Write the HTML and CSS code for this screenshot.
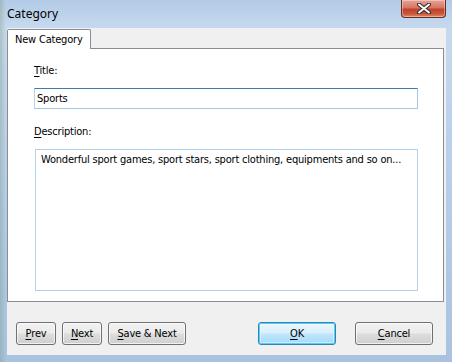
FILE: index.html
```html
<!DOCTYPE html>
<html>
<head>
<meta charset="utf-8">
<link rel="stylesheet" href="styles.css">
</head>
<body>
<div class="window">
  <div class="titlebar">
    <span class="title">Category</span>
    <div class="close">
      <svg width="18" height="11" viewBox="0 0 18 11">
        <path d="M4 1.5 L14 9.5 M14 1.5 L4 9.5" stroke="#2d2d2d" stroke-width="4" stroke-linecap="round"/>
        <path d="M4 1.5 L14 9.5 M14 1.5 L4 9.5" stroke="#ffffff" stroke-width="2" stroke-linecap="round"/>
      </svg>
    </div>
  </div>
  <div class="client">
    <div class="tabs">
      <div class="tab">New Category</div>
    </div>
    <div class="panel">
      <div class="label"><u>T</u>itle:</div>
      <div class="input">Sports</div>
      <div class="label label-desc"><u>D</u>escription:</div>
      <div class="textarea">Wonderful sport games, sport stars, sport clothing, equipments and so on...</div>
    </div>
    <div class="buttons">
      <div class="group">
        <div class="btn btn-sm"><u>P</u>rev</div>
        <div class="btn btn-sm"><u>N</u>ext</div>
        <div class="btn btn-md"><u>S</u>ave &amp; Next</div>
      </div>
      <div class="group group-right">
        <div class="btn btn-lg btn-default"><u>O</u>K</div>
        <div class="btn btn-lg"><u>C</u>ancel</div>
      </div>
    </div>
  </div>
</div>
</body>
</html>
```

FILE: styles.css
```css
html, body {
  margin: 0;
  padding: 0;
}
body {
  width: 452px;
  height: 362px;
  overflow: hidden;
  background: #b8cfe8;
}
.window {
  width: 452px;
  height: 362px;
  box-sizing: border-box;
  padding: 0 6px 7px 7px;
  background:
    linear-gradient(90deg, rgba(120,150,120,0.35) 0px, rgba(160,190,220,0.0) 6px),
    linear-gradient(180deg, #b3cbe6 0px, #c6d9ee 28px, #b5cde8 200px, #a8c2e0 362px);
  display: flex;
  flex-direction: column;
}
.titlebar {
  height: 28px;
  display: flex;
  justify-content: space-between;
  align-items: flex-start;
  flex: none;
}
.title {
  font-family: "Noto Sans", "Open Sans", sans-serif;
  font-size: 12px;
  color: #000;
  margin-top: 6px;
  line-height: 16px;
}
.close {
  width: 45px;
  height: 18px;
  box-sizing: border-box;
  border: 1px solid #6b2a22;
  border-top: none;
  border-radius: 0 0 4px 4px;
  background: linear-gradient(180deg, #e8a496 0%, #d67563 45%, #c1432c 55%, #c9553a 80%, #e08a66 100%);
  box-shadow: inset 0 0 0 1px rgba(255,255,255,0.35);
  display: flex;
  align-items: center;
  justify-content: center;
}
.client {
  flex: 1;
  background: #f0f0f0;
  padding: 1px 2px 0 0;
  display: flex;
  flex-direction: column;
  font-family: "DejaVu Sans Condensed", "DejaVu Sans", sans-serif;
  font-size: 11px;
  letter-spacing: -0.2px;
  color: #000;
}
.tabs {
  display: flex;
  height: 20px;
  position: relative;
  z-index: 1;
}
.tab {
  width: 84px;
  box-sizing: border-box;
  height: 20px;
  background: #ffffff;
  border: 1px solid #898c95;
  border-bottom: none;
  border-radius: 2px 2px 0 0;
  padding: 3px 0 0 7px;
  line-height: 14px;
}
.panel {
  margin-top: -1px;
  height: 254px;
  box-sizing: border-box;
  background: #ffffff;
  border: 1px solid #898c95;
  padding: 15px 25px 0 26px;
  display: flex;
  flex-direction: column;
}
.label {
  line-height: 14px;
  height: 14px;
}
.label-desc {
  margin-top: 16px;
}
.input {
  margin-top: 10px;
  height: 21px;
  box-sizing: border-box;
  border: 1px solid #a6c8e4;
  border-top-color: #3d7bad;
  border-left-color: #b7d2ea;
  padding: 3px 0 0 2px;
  line-height: 14px;
}
.textarea {
  margin-top: 10px;
  margin-left: 1px;
  height: 142px;
  box-sizing: border-box;
  border: 1px solid #b2d2ec;
  padding: 3px 0 0 5px;
  line-height: 14px;
}
.buttons {
  display: flex;
  justify-content: space-between;
  padding: 20px 11px 0 9px;
}
.group {
  display: flex;
  gap: 6px;
}
.group-right {
  gap: 19px;
}
.btn {
  height: 23px;
  box-sizing: border-box;
  border: 1px solid #707070;
  border-radius: 3px;
  background: linear-gradient(180deg, #f2f2f2 0%, #ebebeb 48%, #dddddd 52%, #cfcfcf 100%);
  box-shadow: inset 0 0 0 1px rgba(255,255,255,0.7);
  display: flex;
  align-items: center;
  justify-content: center;
  line-height: 14px;
}
.btn-sm { width: 40px; }
.btn-md { width: 78px; }
.btn-lg { width: 78px; }
.btn-default {
  border-color: #3c7fb1;
  background: linear-gradient(180deg, #eaf6fd 0%, #d9f0fc 48%, #bee6fd 52%, #a7d9f5 100%);
  box-shadow: inset 0 0 0 1px #48d4fa, inset 0 0 0 2px rgba(255,255,255,0.4);
}
u {
  text-decoration: underline;
  text-underline-offset: 2px;
}
```
